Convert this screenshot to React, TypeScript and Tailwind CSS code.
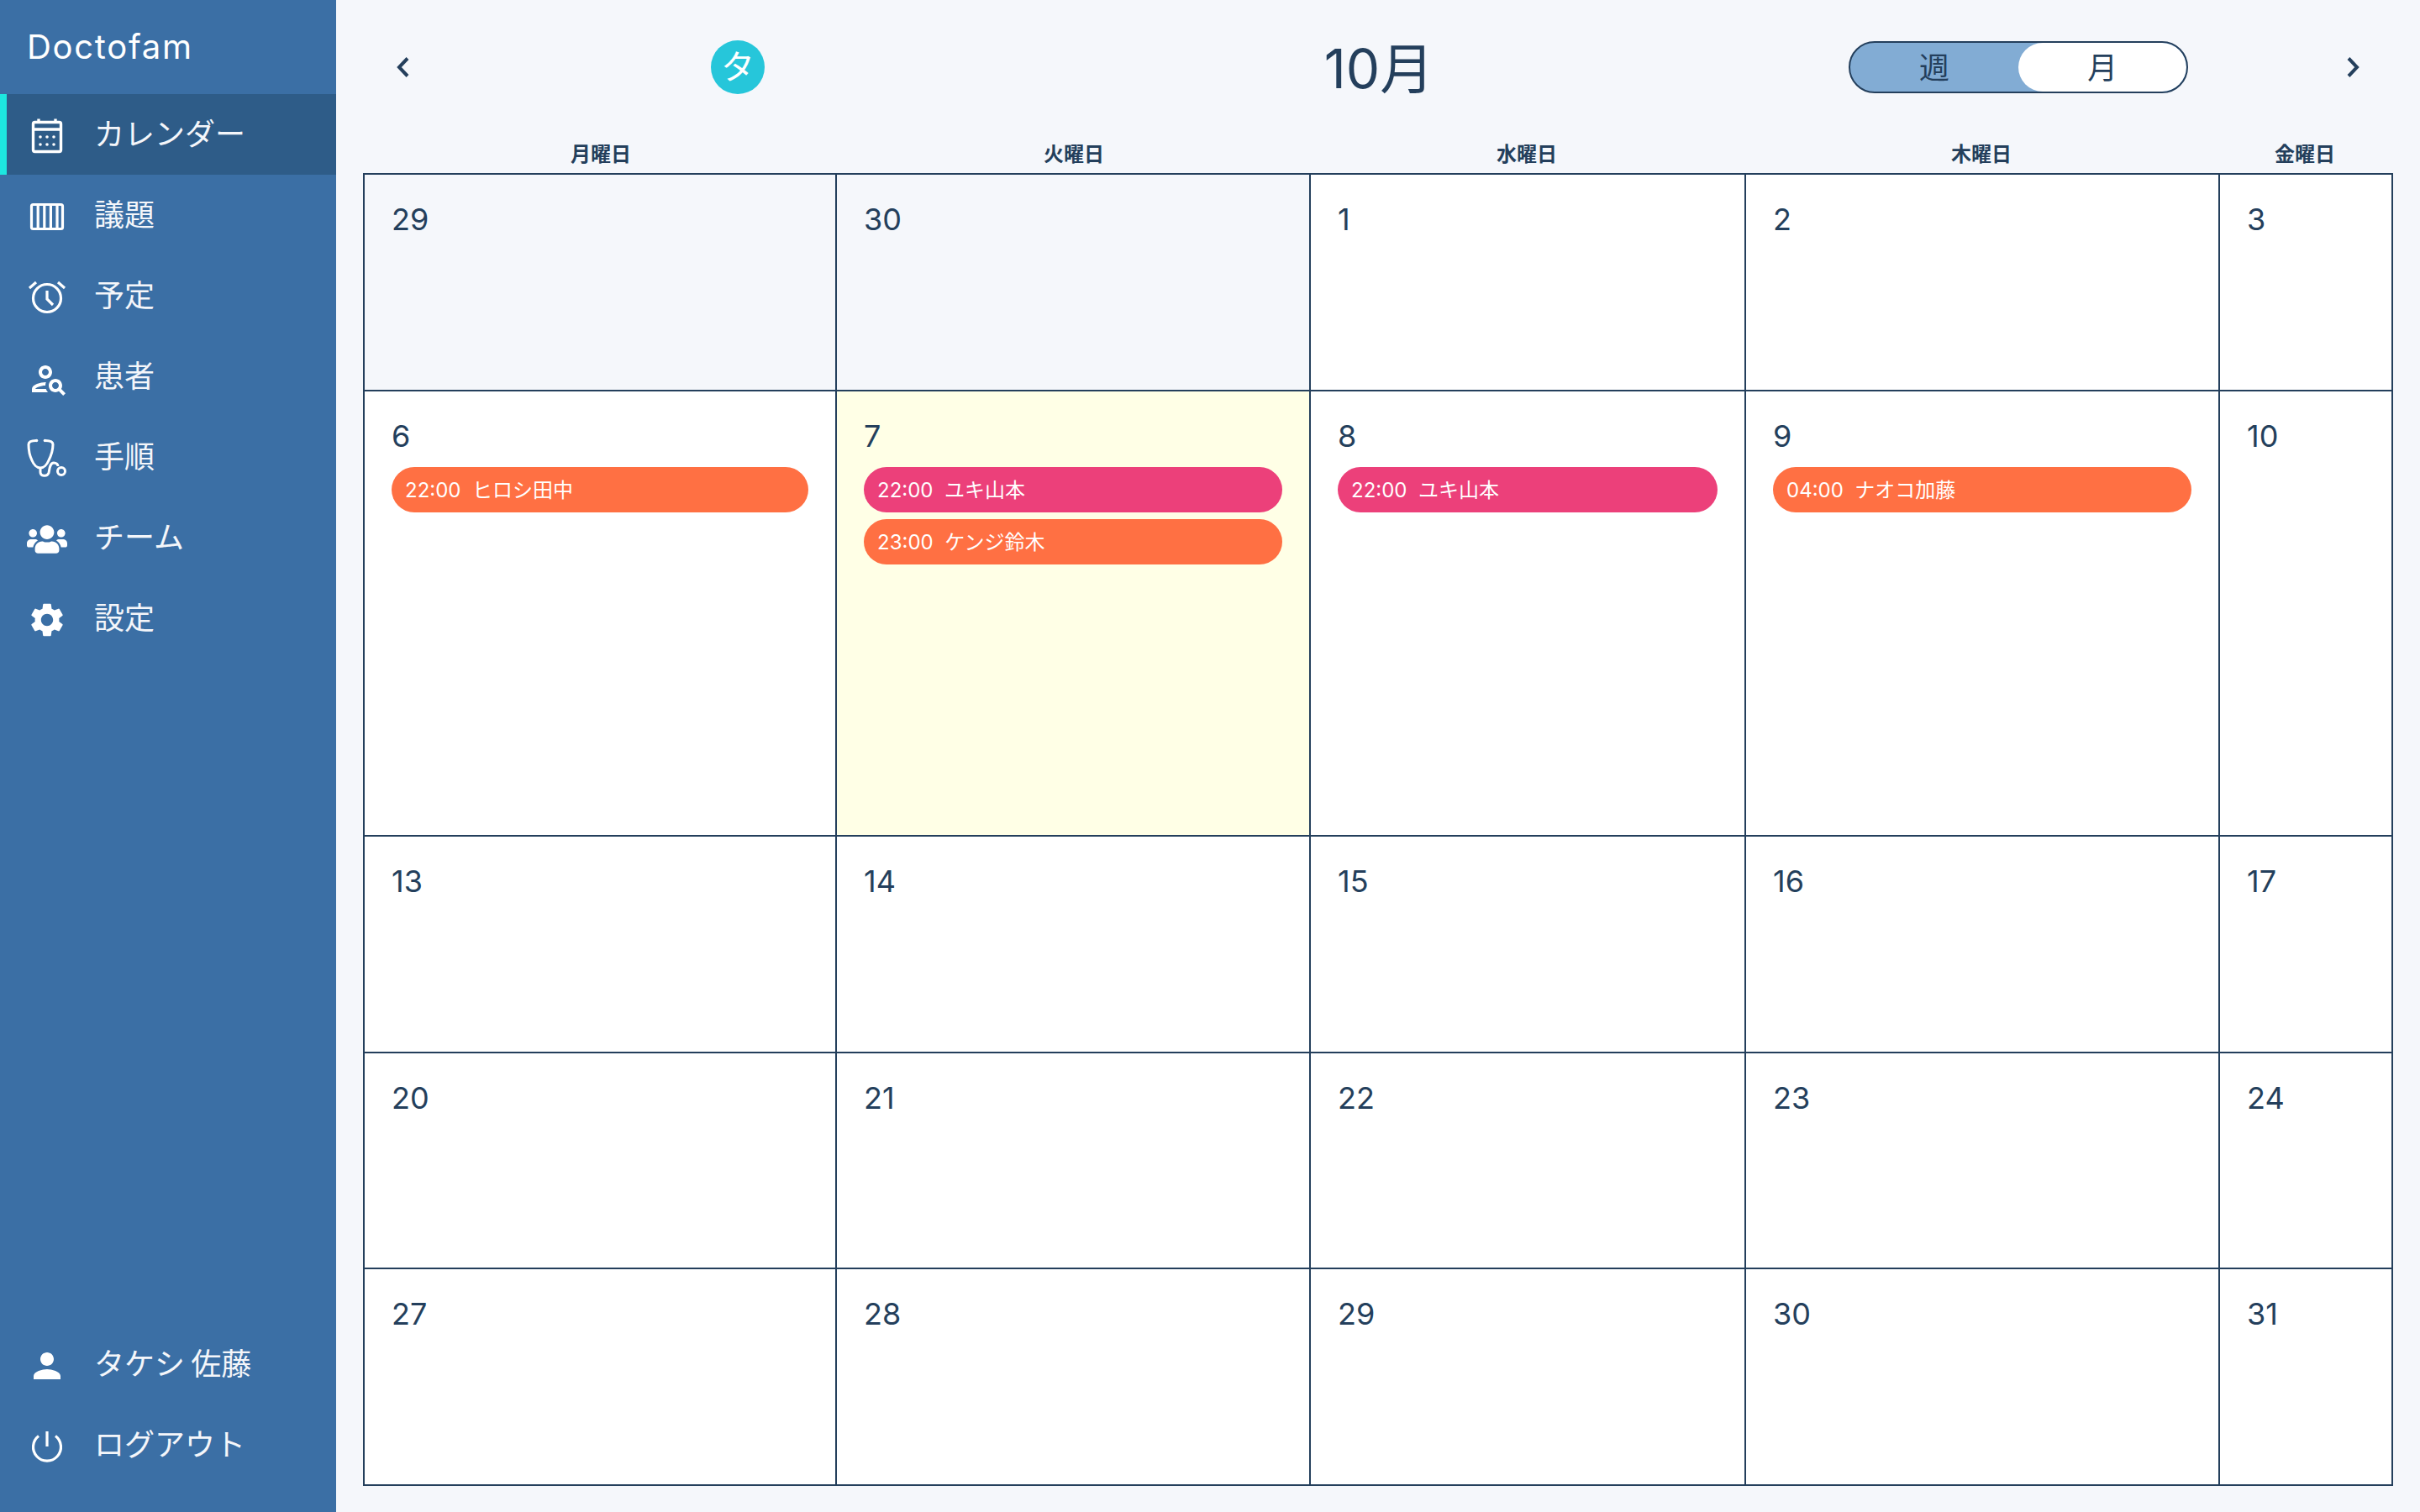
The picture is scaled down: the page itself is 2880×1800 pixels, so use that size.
import { FaUsers } from "react-icons/fa";
import { MdPerson, MdSettings } from "react-icons/md";

const FONT = "font-['Inter','Noto_Sans_CJK_JP',sans-serif]";

function CalendarIcon() {
  return (
    <svg width="48" height="48" viewBox="0 0 48 48" fill="none" stroke="currentColor" strokeWidth="3.4">
      <rect x="7.5" y="9.5" width="33" height="35" rx="2" />
      <path d="M7.5 18h33M14 5.5v5M34 5.5v5" />
      <g fill="currentColor" stroke="none">
        <circle cx="16" cy="27" r="1.8" />
        <circle cx="24" cy="27" r="1.8" />
        <circle cx="32" cy="27" r="1.8" />
        <circle cx="16" cy="36" r="1.8" />
        <circle cx="24" cy="36" r="1.8" />
        <circle cx="32" cy="36" r="1.8" />
      </g>
    </svg>
  );
}

function BoardIcon() {
  return (
    <svg width="48" height="48" viewBox="0 0 48 48" fill="none" stroke="currentColor" strokeWidth="3.2">
      <rect x="5.5" y="11.5" width="37" height="29" rx="2" />
      <path d="M13.2 11.5v29M20.8 11.5v29M28.4 11.5v29M36 11.5v29" />
    </svg>
  );
}

function AlarmIcon() {
  return (
    <svg width="48" height="48" viewBox="0 0 48 48" fill="none" stroke="currentColor" strokeWidth="3.2">
      <circle cx="24" cy="27" r="16.5" />
      <path d="M24 18v10l7 7M3 15l8-7M37 8l8 7" />
    </svg>
  );
}

function PatientIcon() {
  return (
    <svg width="48" height="48" viewBox="0 0 24 24" fill="currentColor" className="translate-x-[2px] translate-y-[3px]">
      <path d="M10,12c2.21,0,4-1.79,4-4c0-2.21-1.79-4-4-4S6,5.79,6,8C6,10.21,7.79,12,10,12z M10,6c1.1,0,2,0.9,2,2c0,1.1-0.9,2-2,2S8,9.1,8,8 C8,6.9,8.9,6,10,6z M4,18c0.22-0.72,3.31-2,6-2c0-0.7,0.13-1.37,0.35-1.99C7.62,13.91,2,15.27,2,18v2h9.54c-0.52-0.58-0.93-1.25-1.19-2H4z M19.43,18.02C19.79,17.43,20,16.74,20,16c0-2.21-1.79-4-4-4s-4,1.79-4,4c0,2.21,1.79,4,4,4c0.74,0,1.43-0.22,2.02-0.57 L20.59,22L22,20.59L19.43,18.02z M16,18c-1.1,0-2-0.9-2-2c0-1.1,0.9-2,2-2s2,0.9,2,2C18,17.1,17.1,18,16,18z" />
    </svg>
  );
}

function StethoscopeIcon() {
  return (
    <svg width="48" height="48" viewBox="0 0 48 48" fill="none" stroke="currentColor" strokeWidth="3">
      <path d="M11 4.5C7 4.5 2 5 2 9C2 14 3 22 6 28C8 33 12 37 16 37C20 37 24 33 26 28C29 22 31 14 31 9C31 5 26 4.5 22 4.5" />
      <path d="M16 37v5C16 47 24 48 26 43C27 39 27 31 32 31C35 31 37 33 37 35" />
      <circle cx="41" cy="41" r="4.5" />
      <circle cx="11.5" cy="4.5" r="1.8" fill="currentColor" stroke="none" />
      <circle cx="21.5" cy="4.5" r="1.8" fill="currentColor" stroke="none" />
    </svg>
  );
}

function PowerIcon() {
  return (
    <svg width="48" height="48" viewBox="0 0 48 48" fill="none" stroke="currentColor" strokeWidth="3.2">
      <path d="M14 13.5A16.5 16.5 0 1 0 34 13.5M24 8v18" />
    </svg>
  );
}

function Chevron({ right }: { right?: boolean }) {
  return (
    <svg width="16" height="26" viewBox="0 0 16 26" fill="none" stroke="#243f5c" strokeWidth="4">
      <path d={right ? "M3 2.5l10 10.5-10 10.5" : "M13 2.5l-10 10.5 10 10.5"} />
    </svg>
  );
}

function NavItem({ icon, label, active, shift }: { icon: React.ReactNode; label: string; active?: boolean; shift?: boolean }) {
  return (
    <div className={`flex h-[96px] items-center gap-[32px] border-l-[8px] pl-[24px] ${active ? "border-[#1de7e0] bg-[#2e5c88]" : "border-transparent"}`}>
      <span className={`flex h-[48px] w-[48px] shrink-0 items-center justify-center text-white ${shift ? "translate-y-[2px]" : ""}`}>{icon}</span>
      <span className="text-[36px] leading-[48px] [word-spacing:-3px] text-[#f4f6fa]">{label}</span>
    </div>
  );
}

type Ev = { time: string; name: string; color: string };

const weekdays = ["月曜日", "火曜日", "水曜日", "木曜日", "金曜日"];
const COLS = "grid-cols-[562px_564px_518px_564px_206px]";

const cells: { day: number; past?: boolean; today?: boolean; events?: Ev[] }[] = [
  { day: 29, past: true },
  { day: 30, past: true },
  { day: 1 },
  { day: 2 },
  { day: 3 },
  { day: 6, events: [{ time: "22:00", name: "ヒロシ田中", color: "bg-[#ff7043]" }] },
  {
    day: 7,
    today: true,
    events: [
      { time: "22:00", name: "ユキ山本", color: "bg-[#ec407a]" },
      { time: "23:00", name: "ケンジ鈴木", color: "bg-[#ff7043]" },
    ],
  },
  { day: 8, events: [{ time: "22:00", name: "ユキ山本", color: "bg-[#ec407a]" }] },
  { day: 9, events: [{ time: "04:00", name: "ナオコ加藤", color: "bg-[#ff7043]" }] },
  { day: 10 },
  { day: 13 },
  { day: 14 },
  { day: 15 },
  { day: 16 },
  { day: 17 },
  { day: 20 },
  { day: 21 },
  { day: 22 },
  { day: 23 },
  { day: 24 },
  { day: 27 },
  { day: 28 },
  { day: 29 },
  { day: 30 },
  { day: 31 },
];

export default function App() {
  return (
    <div className={`flex h-[1800px] w-[2880px] overflow-hidden bg-[#f5f7fb] text-[#243f5c] ${FONT}`}>
      <aside className="flex w-[400px] shrink-0 flex-col bg-[#3b6fa5] pb-[32px]">
        <div className="flex h-[112px] items-center pb-[1px] pl-[32px] text-[40px] leading-none tracking-[1.7px] text-white">Doctofam</div>
        <NavItem active icon={<CalendarIcon />} label="カレンダー" />
        <NavItem icon={<BoardIcon />} label="議題" />
        <NavItem icon={<AlarmIcon />} label="予定" />
        <NavItem icon={<PatientIcon />} label="患者" />
        <NavItem icon={<StethoscopeIcon />} label="手順" />
        <NavItem shift icon={<FaUsers size={48} />} label="チーム" />
        <NavItem shift icon={<MdSettings size={48} />} label="設定" />
        <div className="mt-auto">
          <NavItem shift icon={<MdPerson size={48} />} label="タケシ 佐藤" />
          <NavItem icon={<PowerIcon />} label="ログアウト" />
        </div>
      </aside>

      <main className="flex-1 px-[32px]">
        <header className="flex h-[160px] items-center">
          <button className="flex w-[96px] justify-center">
            <Chevron />
          </button>
          <div className="ml-[318px] flex h-[64px] w-[64px] items-center justify-center rounded-full bg-[#26c6da] text-[40px] text-white">タ</div>
          <h1 className="ml-[581px] w-[300px] pt-[4px] text-center text-[64px] leading-none">10月</h1>
          <div className="relative ml-[409px] flex h-[62px] w-[404px] items-center overflow-hidden rounded-full border-2 border-[#243f5c] bg-[#82acd4] text-[36px]">
            <div className="absolute top-0 right-0 h-full w-[200px] rounded-full bg-white" />
            <div className="relative w-[200px] pt-[2px] text-center">週</div>
            <div className="relative flex-1 pt-[2px] text-center">月</div>
          </div>
          <button className="ml-[148px] flex w-[96px] justify-center">
            <Chevron right />
          </button>
        </header>

        <div className={`grid h-[46px] ${COLS} pl-[2px]`}>
          {weekdays.map((d, i) => (
            <div key={d} className={`pt-[8px] text-center text-[24px] leading-[32px] font-bold ${i > 1 ? "-translate-x-[2px]" : ""}`}>
              {d}
            </div>
          ))}
        </div>

        <div className={`grid w-[2416px] ${COLS} grid-rows-[258px_530px_258px_257px_258px] border-t-2 border-l-2 border-[#243f5c]`}>
          {cells.map((c, i) => (
            <div
              key={i}
              className={`border-r-2 border-b-2 border-[#243f5c] px-[32px] pt-[31px] ${c.today ? "bg-[#ffffe6]" : c.past ? "bg-[#f5f7fb]" : "bg-white"}`}
            >
              <div className="text-[36px] leading-[44px]">{c.day}</div>
              {c.events && (
                <div className="mt-[15px] flex flex-col gap-[8px]">
                  {c.events.map((e) => (
                    <div key={e.time} className={`flex h-[54px] items-center rounded-full px-[16px] pt-[2px] text-[24px] whitespace-pre text-white ${e.color}`}>
                      {e.time}  {e.name}
                    </div>
                  ))}
                </div>
              )}
            </div>
          ))}
        </div>
      </main>
    </div>
  );
}
